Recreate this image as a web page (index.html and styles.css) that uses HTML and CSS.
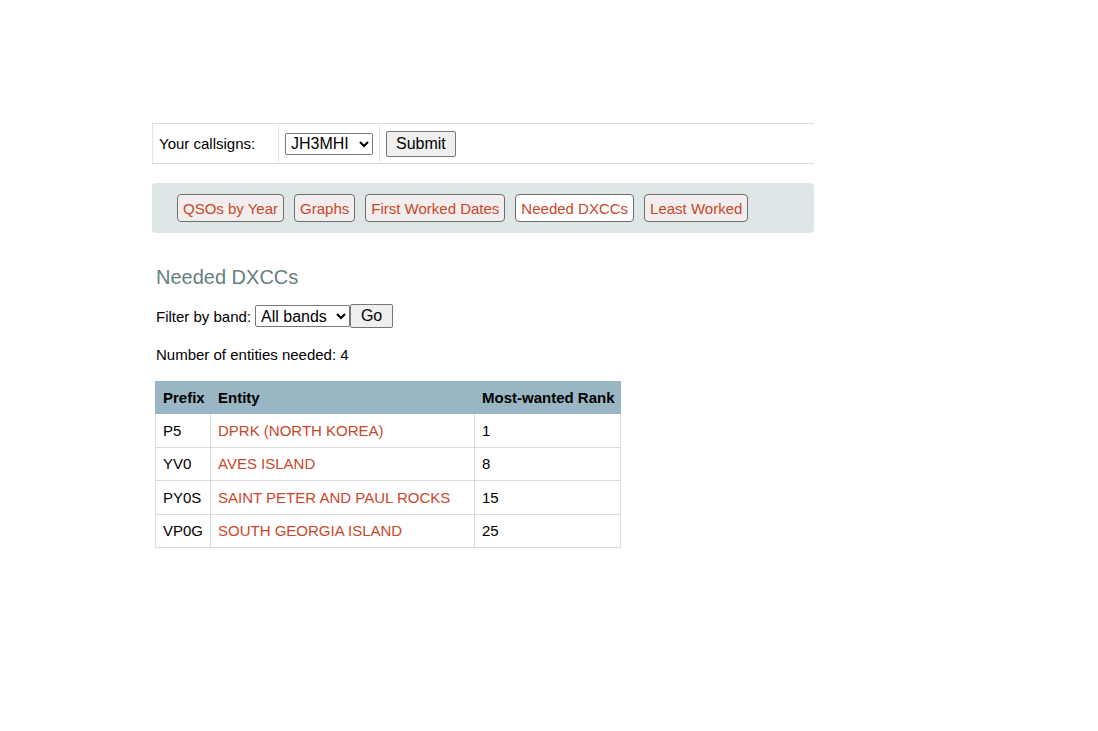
FILE: index.html
```html
<!DOCTYPE html>
<html>
<head>
<meta charset="utf-8">
<link rel="stylesheet" href="styles.css">
</head>
<body>
<div class="page">
  <table class="callbar">
    <tr>
      <td class="cb-label">Your callsigns:</td>
      <td class="cb-select"><select class="sel call"><option>JH3MHI</option></select></td>
      <td class="cb-submit"><button class="btn">Submit</button></td>
    </tr>
  </table>

  <nav class="nav">
    <a class="navbtn">QSOs by Year</a>
    <a class="navbtn">Graphs</a>
    <a class="navbtn">First Worked Dates</a>
    <a class="navbtn active">Needed DXCCs</a>
    <a class="navbtn">Least Worked</a>
  </nav>

  <div class="content">
    <h2 class="title">Needed DXCCs</h2>
    <div class="filter">
      <span>Filter by band:</span>
      <select class="sel band"><option>All bands</option></select><button class="btn go">Go</button>
    </div>
    <p class="count">Number of entities needed: 4</p>
    <table class="grid">
      <colgroup>
        <col class="col-prefix">
        <col class="col-entity">
        <col class="col-rank">
      </colgroup>
      <thead>
        <tr><th>Prefix</th><th>Entity</th><th>Most-wanted Rank</th></tr>
      </thead>
      <tbody>
        <tr><td>P5</td><td><a class="link">DPRK (NORTH KOREA)</a></td><td>1</td></tr>
        <tr><td>YV0</td><td><a class="link">AVES ISLAND</a></td><td>8</td></tr>
        <tr><td>PY0S</td><td><a class="link">SAINT PETER AND PAUL ROCKS</a></td><td>15</td></tr>
        <tr><td>VP0G</td><td><a class="link">SOUTH GEORGIA ISLAND</a></td><td>25</td></tr>
      </tbody>
    </table>
  </div>
</div>
</body>
</html>
```

FILE: styles.css
```css
html, body {
  margin: 0;
  padding: 0;
  background: #fff;
}
body {
  font-family: "Liberation Sans", Arial, sans-serif;
  font-size: 15px;
  color: #000;
}
.page {
  width: 662px;
  margin-left: 152px;
  padding-top: 123px;
}
.callbar {
  width: 100%;
  border-collapse: collapse;
  border-top: 1px solid #dcdcdc;
  border-bottom: 1px solid #dcdcdc;
  border-left: 1px solid #e4e4e4;
}
.callbar td {
  height: 39px;
  padding: 0 6px;
  vertical-align: middle;
}
.cb-label {
  width: 113px;
  border-right: 1px solid #e4e4e4;
}
.cb-select {
  width: 88px;
  border-right: 1px solid #e4e4e4;
}
.sel {
  font-family: "Liberation Sans", Arial, sans-serif;
  font-size: 16px;
  height: 22px;
  padding: 0 1px;
  border: 1px solid #767676;
  border-radius: 2px;
  background: #fff;
  color: #000;
}
.call {
  width: 88px;
}
.btn {
  font-family: "Liberation Sans", Arial, sans-serif;
  font-size: 16px;
  height: 26px;
  padding: 0 9px;
  border: 1px solid #767676;
  border-radius: 2px;
  background: #efefef;
  color: #000;
}
.nav {
  margin-top: 19px;
  height: 50px;
  background: #dfe6e8;
  border-radius: 4px;
  display: flex;
  align-items: center;
  gap: 10px;
  padding-left: 25px;
  box-sizing: border-box;
}
.navbtn {
  display: inline-flex;
  align-items: center;
  height: 28px;
  box-sizing: border-box;
  padding: 0 5px;
  border: 1px solid #6d6d6d;
  border-radius: 4px;
  background: #f2eeed;
  color: #c8472c;
  font-size: 15px;
  cursor: pointer;
}
.navbtn.active {
  background: #fff;
}
.content {
  padding-left: 3px;
}
.title {
  margin: 32px 0 0 1px;
  font-size: 20px;
  font-weight: normal;
  color: #687e7f;
  line-height: 24px;
}
.filter {
  margin-top: 15px;
  display: flex;
  align-items: center;
  padding-left: 1px;
}
.filter span {
  margin-right: 4px;
}
.band {
  height: 22px;
  width: 95px;
}
.go {
  height: 24px;
  width: 43px;
  padding: 0;
}
.count {
  margin: 18px 0 0 1px;
  line-height: 17px;
}
.grid {
  margin-top: 18px;
  border-collapse: collapse;
  table-layout: fixed;
  width: 465px;
}
.col-prefix { width: 55px; }
.col-entity { width: 264px; }
.col-rank { width: 146px; }
.grid th, .grid td {
  border: 1px solid #dadada;
  text-align: left;
  padding: 0 7px;
  height: 32.5px;
  font-size: 15px;
  white-space: nowrap;
}
.grid th {
  background: #98b6c4;
  font-weight: bold;
  border-color: #98b6c4;
  height: 31px;
}
.link {
  color: #c8472c;
  text-decoration: none;
}
```
